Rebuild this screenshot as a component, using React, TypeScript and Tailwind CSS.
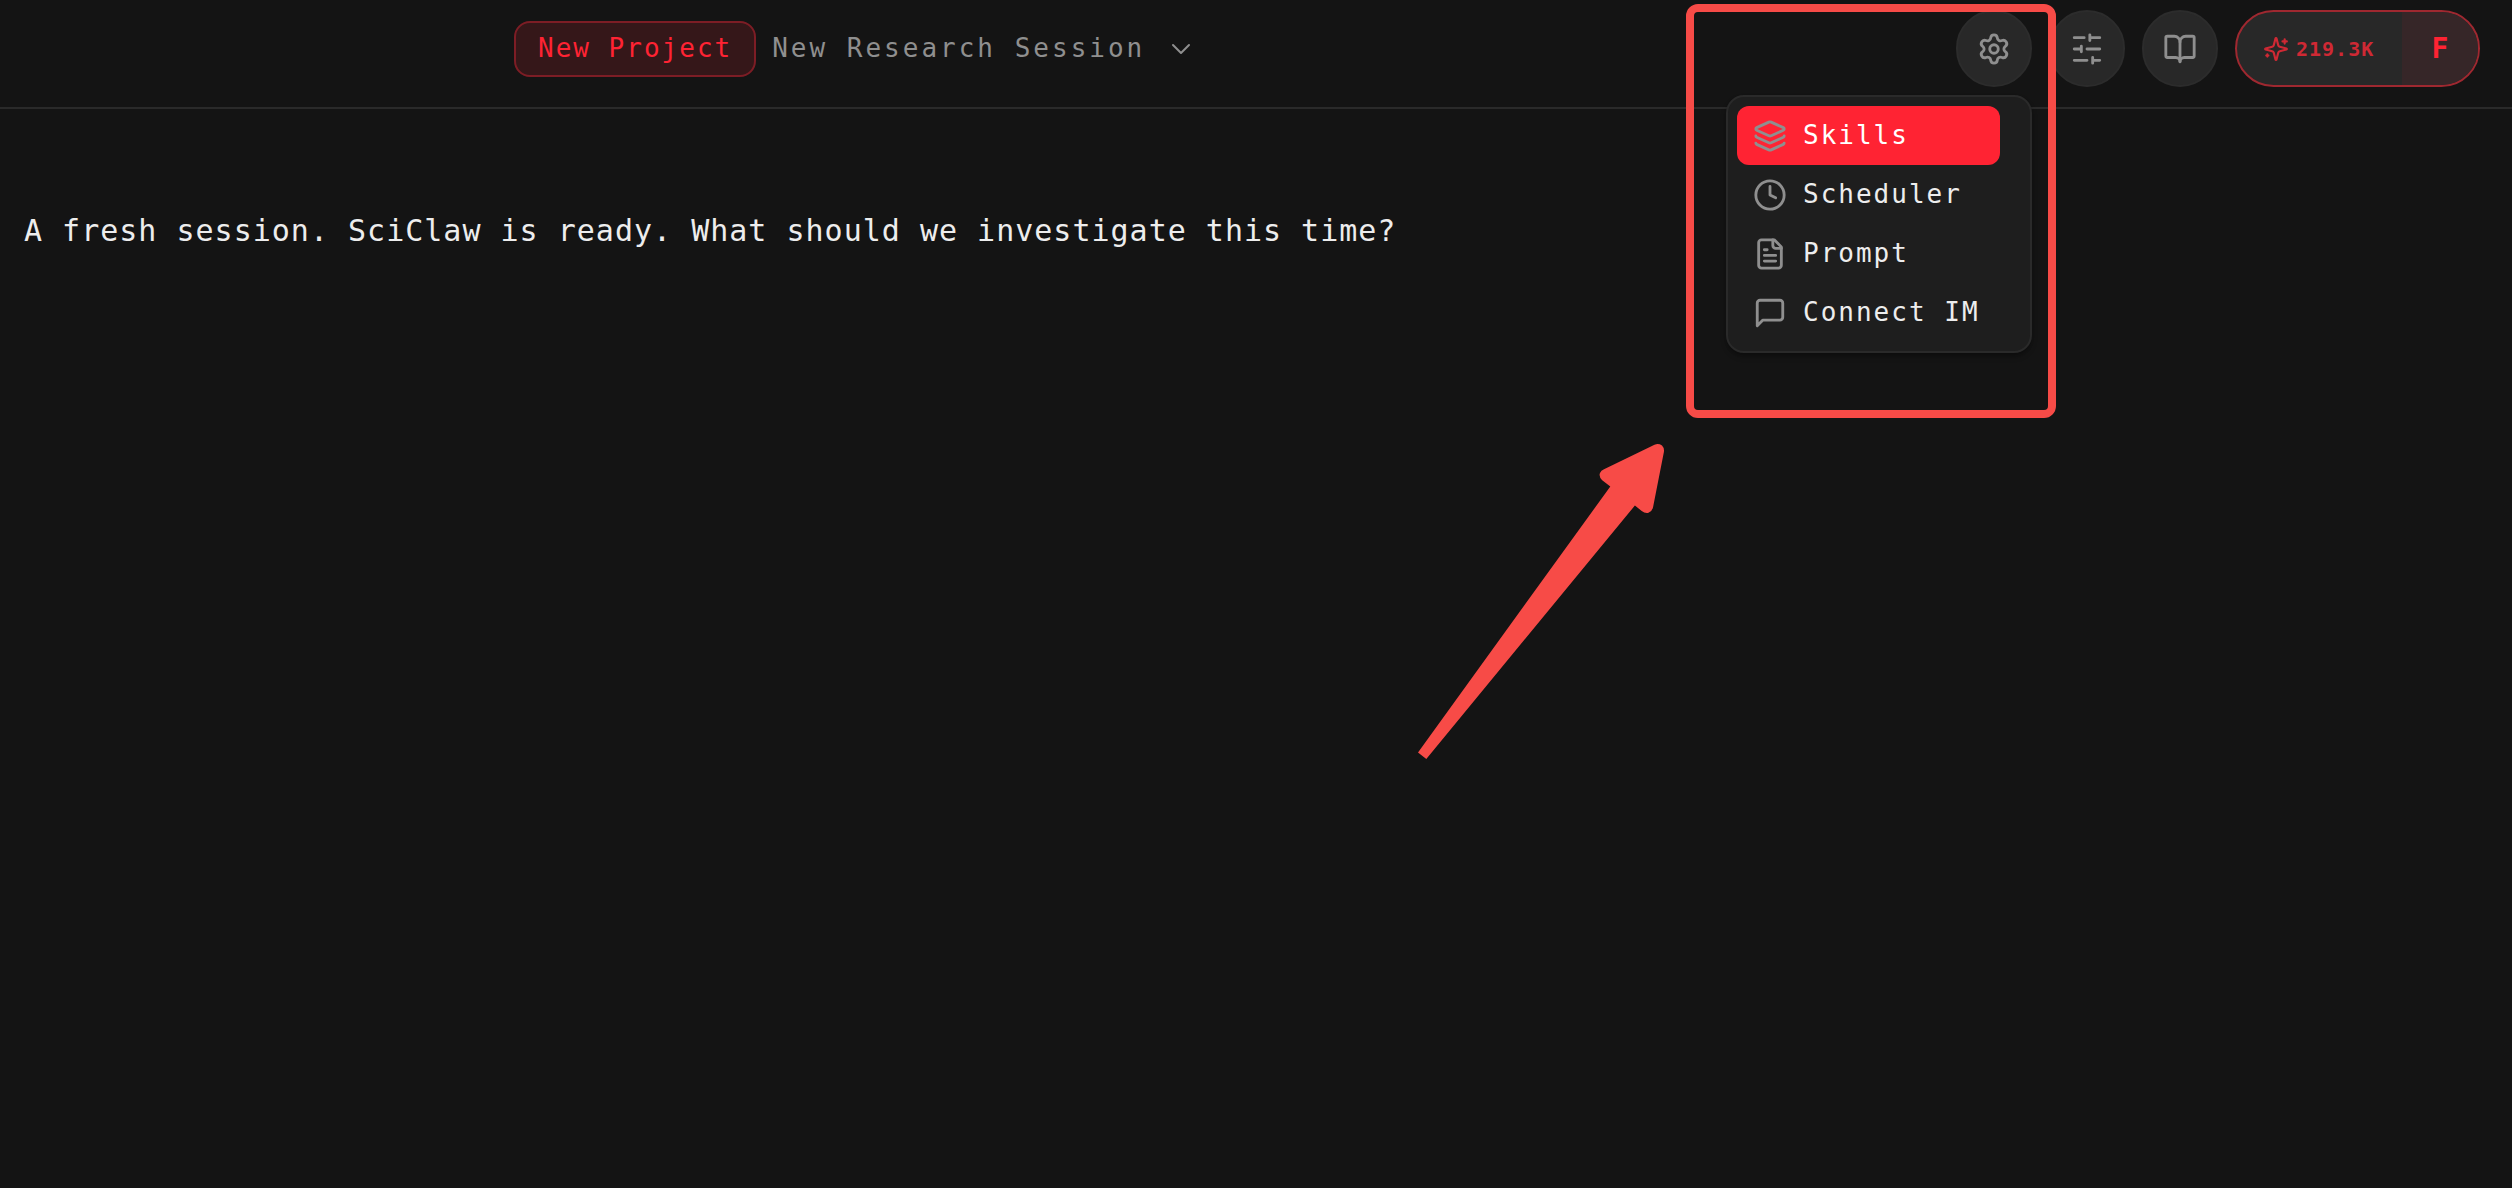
import type { ReactNode } from "react"
import { BookOpen, ChevronDown, Clock, Layers, Settings } from "lucide-react"

const iconProps = {
  viewBox: "0 0 24 24",
  fill: "none",
  stroke: "currentColor",
  strokeWidth: 2,
  strokeLinecap: "round",
  strokeLinejoin: "round",
  "aria-hidden": true,
} as const

function SlidersIcon() {
  return (
    <svg {...iconProps} className="size-[34px]">
      <path d="M21 4h-7M10 4H3M21 12h-9M8 12H3M21 20h-5M12 20H3M14 2v4M8 10v4M16 18v4" />
    </svg>
  )
}

function FileIcon() {
  return (
    <svg {...iconProps} className="size-[34px]">
      <path d="M15 2H6a2 2 0 0 0-2 2v16a2 2 0 0 0 2 2h12a2 2 0 0 0 2-2V7Z" />
      <path d="M14 2v4a2 2 0 0 0 2 2h4M10 9H8M16 13H8M16 17H8" />
    </svg>
  )
}

function MessageIcon() {
  return (
    <svg {...iconProps} className="size-[34px]">
      <path d="M21 15a2 2 0 0 1-2 2H7l-4 4V5a2 2 0 0 1 2-2h14a2 2 0 0 1 2 2z" />
    </svg>
  )
}

function SparklesIcon() {
  return (
    <svg {...iconProps} className="size-[26px]">
      <path d="M9.937 15.5A2 2 0 0 0 8.5 14.063l-6.135-1.582a.5.5 0 0 1 0-.962L8.5 9.936A2 2 0 0 0 9.937 8.5l1.582-6.135a.5.5 0 0 1 .963 0L14.063 8.5A2 2 0 0 0 15.5 9.937l6.135 1.581a.5.5 0 0 1 0 .964L15.5 14.063a2 2 0 0 0-1.437 1.437l-1.582 6.135a.5.5 0 0 1-.963 0z" />
      <path d="M20 3v4M22 5h-4M4 17v2M5 18H3" />
    </svg>
  )
}

function RoundButton({ label, children }: { label: string; children: ReactNode }) {
  return (
    <button
      aria-label={label}
      className="flex h-[77px] w-[76px] items-center justify-center rounded-full border-2 border-[#2c2c2c] bg-[#282828] text-[#8f8f8f]"
    >
      {children}
    </button>
  )
}

const menuItems = [
  { label: "Skills", icon: <Layers size={34} />, active: true },
  { label: "Scheduler", icon: <Clock size={34} /> },
  { label: "Prompt", icon: <FileIcon /> },
  { label: "Connect IM", icon: <MessageIcon /> },
]

function SettingsMenu() {
  return (
    <div className="absolute right-0 top-[85px] z-10 flex w-[306px] flex-col rounded-[18px] border-2 border-[#2a2a2a] bg-[#1e1e1e] py-[9px] pl-[9px] pr-[30px] shadow-md shadow-black/30">
      {menuItems.map((item) => (
        <button
          key={item.label}
          className={
            item.active
              ? "flex h-[59px] items-center gap-4 rounded-xl bg-[#ff2333] pl-4 text-[26px] tracking-[2px] text-white"
              : "flex h-[59px] items-center gap-4 rounded-xl pl-4 text-[26px] tracking-[2px] text-[#ededed]"
          }
        >
          <span className="shrink-0 text-[#8f8f8f]">{item.icon}</span>
          <span className="whitespace-nowrap">{item.label}</span>
        </button>
      ))}
    </div>
  )
}

export default function App() {
  return (
    <div className="relative min-h-screen overflow-hidden bg-[#141414] font-['DejaVu_Sans_Mono',monospace] text-[#ededed]">
      <header className="flex items-center justify-between border-b-2 border-[#2a2a2a] pb-5 pl-[514px] pr-8 pt-[10px]">
        <div className="flex items-center gap-4">
          <button className="h-[56px] rounded-2xl border-2 border-[#7d1d25] bg-[#351719] px-[22px] text-[26px] tracking-[2px] text-[#ff2333]">
            New Project
          </button>
          <button className="flex items-center gap-5 text-[26px] tracking-[3px] text-[#8f8f8f]">
            New Research Session
            <ChevronDown size={32} strokeWidth={1.5} />
          </button>
        </div>

        <div className="flex items-center gap-[17px]">
          <div className="relative">
            <RoundButton label="Settings">
              <Settings size={34} />
            </RoundButton>
            <SettingsMenu />
          </div>
          <RoundButton label="Preferences">
            <SlidersIcon />
          </RoundButton>
          <RoundButton label="Docs">
            <BookOpen size={34} />
          </RoundButton>
          <button className="flex h-[77px] w-[245px] overflow-hidden rounded-full border-2 border-[#9f2830] bg-[#282828] font-bold">
            <span className="flex h-full flex-1 items-center gap-[7px] pl-[26px] text-[20px] tracking-[1px] text-[#cf2934]">
              <SparklesIcon />
              219.3K
            </span>
            <span className="flex h-full w-[76px] items-center justify-center bg-[#362628] text-[28px] text-[#ff2333]">
              F
            </span>
          </button>
        </div>
      </header>

      <main className="px-6 pt-[102px]">
        <p className="text-[30px] leading-10 tracking-[1px]">
          A fresh session. SciClaw is ready. What should we investigate this time?
        </p>
      </main>

      {/* callout around the settings menu */}
      <div className="pointer-events-none absolute right-[456px] top-1 z-20 h-[414px] w-[370px] rounded-xl border-8 border-[#f74b47]" />
      <svg
        viewBox="0 0 300 360"
        className="pointer-events-none absolute right-[812px] top-[420px] z-20 h-[360px] w-[300px]"
        aria-hidden="true"
      >
        <path
          fill="#f74b47"
          d="M18 332.500L210.300 66.500L202.200 60.300Q198.500 56.500 200 53Q201 50.500 204 49.300L254.500 24.700Q258.500 23 262 25.500Q264.500 28 263.900 32L253 87.500Q252 91.500 248.500 92.700Q245 93.500 241.700 91L234.900 85.500L26.300 339Z"
        />
      </svg>
    </div>
  )
}
